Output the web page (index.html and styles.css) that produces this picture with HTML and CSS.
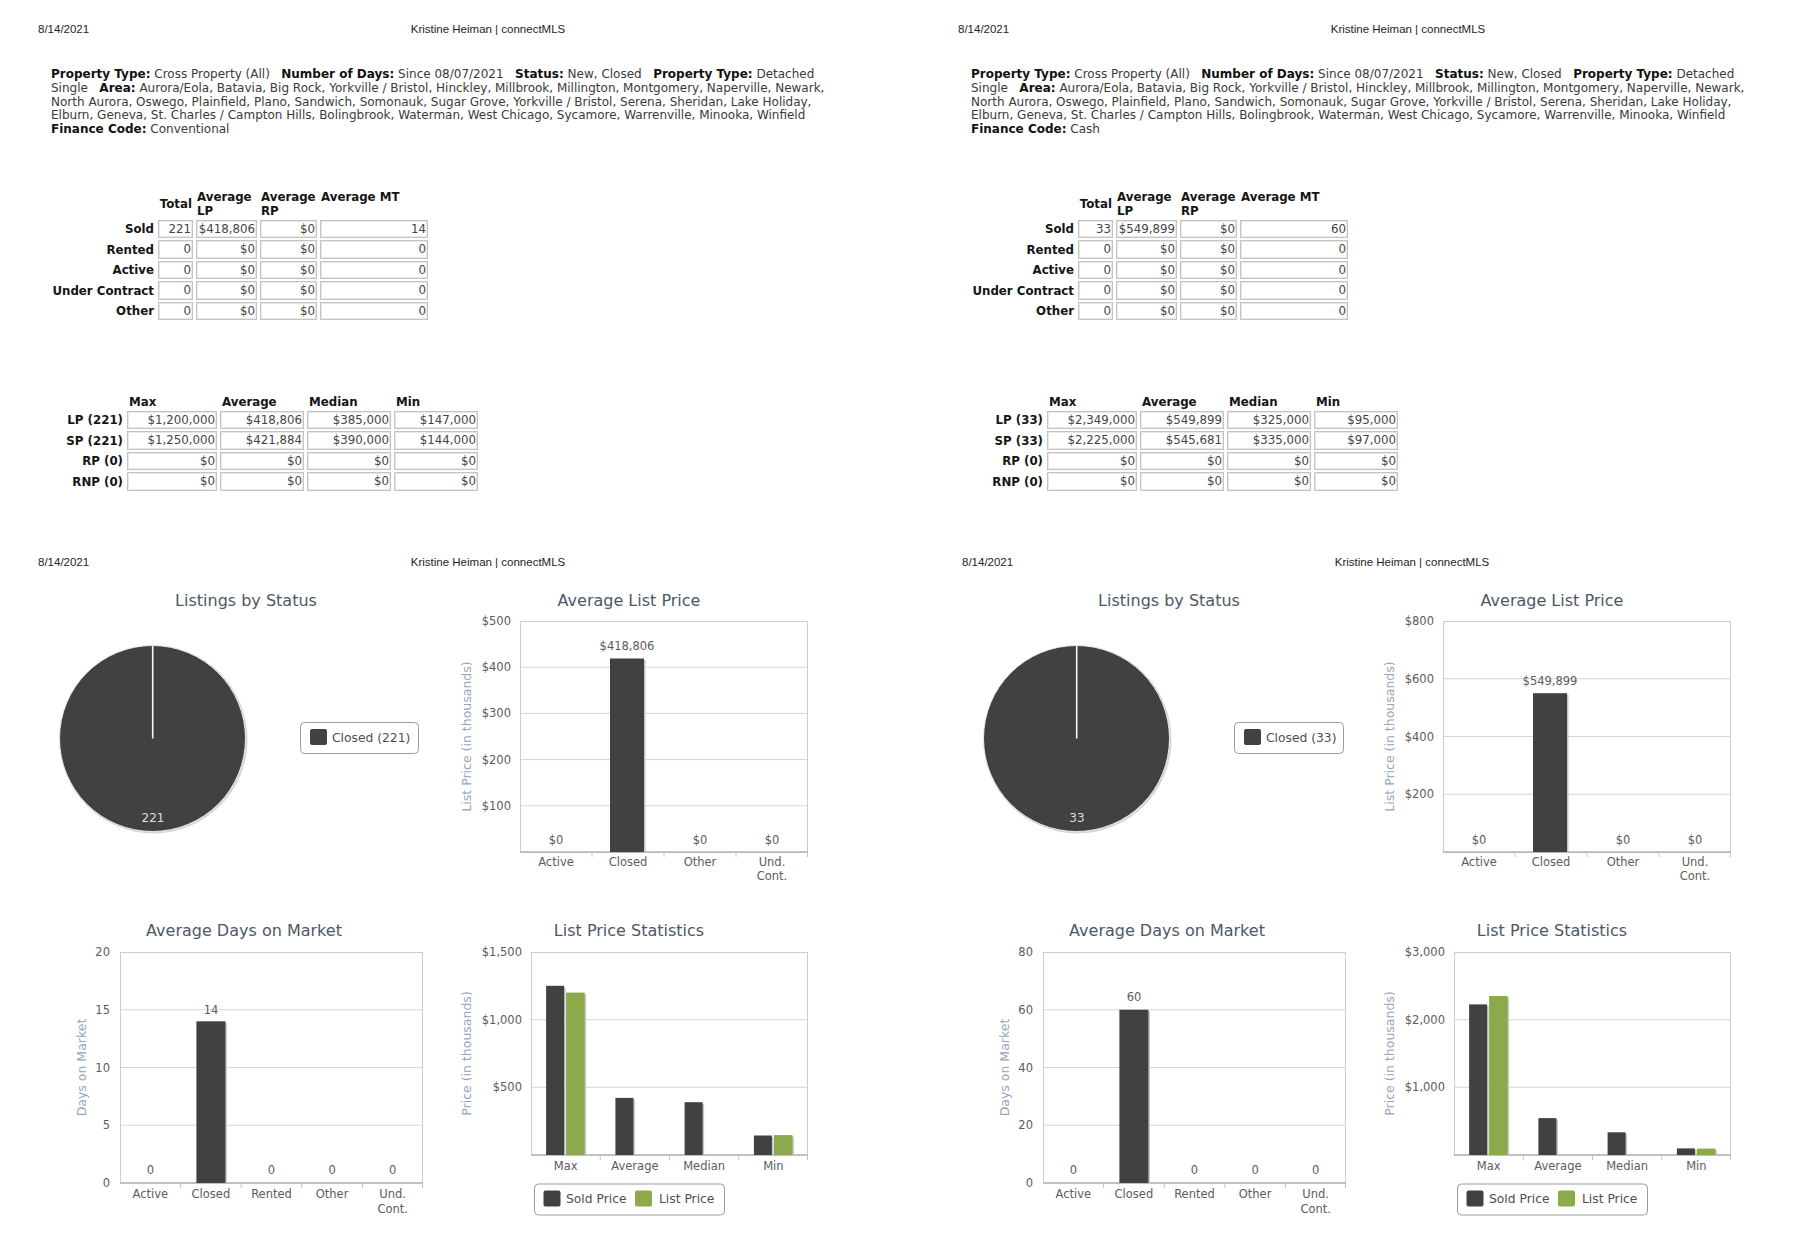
FILE: index.html
```html
<!DOCTYPE html>
<html lang="en">
<head>
<meta charset="utf-8">
<title>connectMLS Statistics</title>
<link rel="stylesheet" href="styles.css">
</head>
<body>
<div class="row row-top">
  <section class="page">
    <div class="hdr"><span class="hdr-date">8/14/2021</span><span class="hdr-title">Kristine Heiman | connectMLS</span></div>
    <p class="crit"><b>Property Type:</b> Cross Property (All)&nbsp;&nbsp; <b>Number of Days:</b> Since 08/07/2021&nbsp;&nbsp; <b>Status:</b> New, Closed&nbsp;&nbsp; <b>Property Type:</b> Detached<br>Single&nbsp;&nbsp; <b>Area:</b> Aurora/Eola, Batavia, Big Rock, Yorkville / Bristol, Hinckley, Millbrook, Millington, Montgomery, Naperville, Newark,<br>North Aurora, Oswego, Plainfield, Plano, Sandwich, Somonauk, Sugar Grove, Yorkville / Bristol, Serena, Sheridan, Lake Holiday,<br>Elburn, Geneva, St. Charles / Campton Hills, Bolingbrook, Waterman, West Chicago, Sycamore, Warrenville, Minooka, Winfield<br><b>Finance Code:</b> Conventional</p>
    <table class="stat stat-a">
      <tr><th class="w-lab"></th><th class="w-tot mid">Total</th><th class="w-lp">Average LP</th><th class="w-rp">Average RP</th><th class="w-mt">Average MT</th></tr>
      <tr><th class="lab">Sold</th><td>221</td><td>$418,806</td><td>$0</td><td>14</td></tr>
      <tr><th class="lab">Rented</th><td>0</td><td>$0</td><td>$0</td><td>0</td></tr>
      <tr><th class="lab">Active</th><td>0</td><td>$0</td><td>$0</td><td>0</td></tr>
      <tr><th class="lab">Under Contract</th><td>0</td><td>$0</td><td>$0</td><td>0</td></tr>
      <tr><th class="lab">Other</th><td>0</td><td>$0</td><td>$0</td><td>0</td></tr>
    </table>
    <table class="stat stat-b">
      <tr><th class="w-lab2"></th><th class="w-max">Max</th><th class="w-q">Average</th><th class="w-q">Median</th><th class="w-q">Min</th></tr>
      <tr><th class="lab">LP (221)</th><td>$1,200,000</td><td>$418,806</td><td>$385,000</td><td>$147,000</td></tr>
      <tr><th class="lab">SP (221)</th><td>$1,250,000</td><td>$421,884</td><td>$390,000</td><td>$144,000</td></tr>
      <tr><th class="lab">RP (0)</th><td>$0</td><td>$0</td><td>$0</td><td>$0</td></tr>
      <tr><th class="lab">RNP (0)</th><td>$0</td><td>$0</td><td>$0</td><td>$0</td></tr>
    </table>
  </section>
  <section class="page">
    <div class="hdr"><span class="hdr-date">8/14/2021</span><span class="hdr-title">Kristine Heiman | connectMLS</span></div>
    <p class="crit"><b>Property Type:</b> Cross Property (All)&nbsp;&nbsp; <b>Number of Days:</b> Since 08/07/2021&nbsp;&nbsp; <b>Status:</b> New, Closed&nbsp;&nbsp; <b>Property Type:</b> Detached<br>Single&nbsp;&nbsp; <b>Area:</b> Aurora/Eola, Batavia, Big Rock, Yorkville / Bristol, Hinckley, Millbrook, Millington, Montgomery, Naperville, Newark,<br>North Aurora, Oswego, Plainfield, Plano, Sandwich, Somonauk, Sugar Grove, Yorkville / Bristol, Serena, Sheridan, Lake Holiday,<br>Elburn, Geneva, St. Charles / Campton Hills, Bolingbrook, Waterman, West Chicago, Sycamore, Warrenville, Minooka, Winfield<br><b>Finance Code:</b> Cash</p>
    <table class="stat stat-a">
      <tr><th class="w-lab"></th><th class="w-tot mid">Total</th><th class="w-lp">Average LP</th><th class="w-rp">Average RP</th><th class="w-mt">Average MT</th></tr>
      <tr><th class="lab">Sold</th><td>33</td><td>$549,899</td><td>$0</td><td>60</td></tr>
      <tr><th class="lab">Rented</th><td>0</td><td>$0</td><td>$0</td><td>0</td></tr>
      <tr><th class="lab">Active</th><td>0</td><td>$0</td><td>$0</td><td>0</td></tr>
      <tr><th class="lab">Under Contract</th><td>0</td><td>$0</td><td>$0</td><td>0</td></tr>
      <tr><th class="lab">Other</th><td>0</td><td>$0</td><td>$0</td><td>0</td></tr>
    </table>
    <table class="stat stat-b">
      <tr><th class="w-lab2"></th><th class="w-max">Max</th><th class="w-q">Average</th><th class="w-q">Median</th><th class="w-q">Min</th></tr>
      <tr><th class="lab">LP (33)</th><td>$2,349,000</td><td>$549,899</td><td>$325,000</td><td>$95,000</td></tr>
      <tr><th class="lab">SP (33)</th><td>$2,225,000</td><td>$545,681</td><td>$335,000</td><td>$97,000</td></tr>
      <tr><th class="lab">RP (0)</th><td>$0</td><td>$0</td><td>$0</td><td>$0</td></tr>
      <tr><th class="lab">RNP (0)</th><td>$0</td><td>$0</td><td>$0</td><td>$0</td></tr>
    </table>
  </section>
</div>

<div class="row row-bottom">
  <section class="page page-b">
    <div class="hdr"><span class="hdr-date">8/14/2021</span><span class="hdr-title">Kristine Heiman | connectMLS</span></div>
    <div class="charts">
      <!-- Listings by Status -->
      <svg class="chart" width="410" height="320" viewBox="0 0 410 320">
        <text class="t-title" x="216" y="26" text-anchor="middle">Listings by Status</text>
        <circle cx="123.5" cy="159.5" r="94" fill="#d6d6d6"/>
        <circle cx="122.5" cy="158.5" r="93" class="pie"/>
        <line x1="122.7" y1="66" x2="122.7" y2="158.5" stroke="#f4f4f4" stroke-width="1.6"/>
        <text class="t-pie" x="123" y="241.5" text-anchor="middle">221</text>
        <rect class="legend" x="270.5" y="142.5" width="118" height="31" rx="4"/>
        <rect class="sw-dark" x="280" y="149" width="17" height="16" rx="2"/>
        <text class="t-leg" x="302" y="161.5">Closed (221)</text>
      </svg>
      <!-- Average List Price -->
      <svg class="chart" width="400" height="320" viewBox="0 0 400 320">
        <text class="t-title" x="189" y="26" text-anchor="middle">Average List Price</text>
        <text class="t-axis" transform="translate(30.5 156.5) rotate(-90)" text-anchor="middle">List Price (in thousands)</text>
        <g class="grid">
          <line x1="80" y1="87.2" x2="368" y2="87.2"/>
          <line x1="80" y1="133.4" x2="368" y2="133.4"/>
          <line x1="80" y1="179.6" x2="368" y2="179.6"/>
          <line x1="80" y1="225.8" x2="368" y2="225.8"/>
        </g>
        <rect class="frame" x="80.5" y="41.5" width="287" height="231"/>
        <line class="axis" x1="80" y1="272" x2="368" y2="272"/>
        <g class="ticks">
          <line x1="152" y1="272" x2="152" y2="277"/>
          <line x1="224" y1="272" x2="224" y2="277"/>
          <line x1="296" y1="272" x2="296" y2="277"/>
          <line x1="367.5" y1="272" x2="367.5" y2="277"/>
        </g>
        <g class="t-lbl" text-anchor="end">
          <text x="71" y="45">$500</text>
          <text x="71" y="91.2">$400</text>
          <text x="71" y="137.4">$300</text>
          <text x="71" y="183.6">$200</text>
          <text x="71" y="229.8">$100</text>
        </g>
        <rect class="bar-sh" x="171.5" y="80" width="34" height="192"/>
        <rect class="bar" x="170" y="78.5" width="34" height="193.5"/>
        <g class="t-lbl" text-anchor="middle">
          <text x="187" y="70">$418,806</text>
          <text x="116" y="264">$0</text>
          <text x="260" y="264">$0</text>
          <text x="332" y="264">$0</text>
          <text x="116" y="286">Active</text>
          <text x="188" y="286">Closed</text>
          <text x="260" y="286">Other</text>
          <text x="332" y="286">Und.</text>
          <text x="332" y="300">Cont.</text>
        </g>
      </svg>
      <!-- Average Days on Market -->
      <svg class="chart" width="410" height="330" viewBox="0 0 410 330">
        <text class="t-title" x="214" y="36" text-anchor="middle">Average Days on Market</text>
        <text class="t-axis" transform="translate(55.5 167.5) rotate(-90)" text-anchor="middle">Days on Market</text>
        <g class="grid">
          <line x1="90" y1="109.75" x2="393" y2="109.75"/>
          <line x1="90" y1="167.5" x2="393" y2="167.5"/>
          <line x1="90" y1="225.25" x2="393" y2="225.25"/>
        </g>
        <rect class="frame" x="90.5" y="52.5" width="302" height="230.5"/>
        <line class="axis" x1="90" y1="283" x2="393" y2="283"/>
        <g class="ticks">
          <line x1="150.6" y1="283" x2="150.6" y2="288"/>
          <line x1="211.2" y1="283" x2="211.2" y2="288"/>
          <line x1="271.8" y1="283" x2="271.8" y2="288"/>
          <line x1="332.4" y1="283" x2="332.4" y2="288"/>
          <line x1="392.5" y1="283" x2="392.5" y2="288"/>
        </g>
        <g class="t-lbl" text-anchor="end">
          <text x="80" y="56">20</text>
          <text x="80" y="113.75">15</text>
          <text x="80" y="171.5">10</text>
          <text x="80" y="229.25">5</text>
          <text x="80" y="287">0</text>
        </g>
        <rect class="bar-sh" x="167.9" y="122.8" width="29" height="160.2"/>
        <rect class="bar" x="166.4" y="121.3" width="29" height="161.7"/>
        <g class="t-lbl" text-anchor="middle">
          <text x="181" y="114">14</text>
          <text x="120.3" y="274">0</text>
          <text x="241.5" y="274">0</text>
          <text x="302.1" y="274">0</text>
          <text x="362.7" y="274">0</text>
          <text x="120.3" y="298">Active</text>
          <text x="180.9" y="298">Closed</text>
          <text x="241.5" y="298">Rented</text>
          <text x="302.1" y="298">Other</text>
          <text x="362.7" y="298">Und.</text>
          <text x="362.7" y="313">Cont.</text>
        </g>
      </svg>
      <!-- List Price Statistics -->
      <svg class="chart" width="400" height="330" viewBox="0 0 400 330">
        <text class="t-title" x="189" y="36" text-anchor="middle">List Price Statistics</text>
        <text class="t-axis" transform="translate(30.5 153.5) rotate(-90)" text-anchor="middle">Price (in thousands)</text>
        <g class="grid">
          <line x1="91" y1="119.7" x2="368" y2="119.7"/>
          <line x1="91" y1="187.3" x2="368" y2="187.3"/>
        </g>
        <rect class="frame" x="91.5" y="52.5" width="276" height="202.5"/>
        <line class="axis" x1="91" y1="255" x2="368" y2="255"/>
        <g class="ticks">
          <line x1="160.25" y1="255" x2="160.25" y2="260"/>
          <line x1="229.5" y1="255" x2="229.5" y2="260"/>
          <line x1="298.75" y1="255" x2="298.75" y2="260"/>
          <line x1="367.5" y1="255" x2="367.5" y2="260"/>
        </g>
        <g class="t-lbl" text-anchor="end">
          <text x="82" y="56">$1,500</text>
          <text x="82" y="123.7">$1,000</text>
          <text x="82" y="191.3">$500</text>
        </g>
        <rect class="bar-sh" x="107.6" y="87.3" width="18" height="167.7"/>
        <rect class="bar" x="106.1" y="85.8" width="18" height="169.2"/>
        <rect class="bar-sh" x="127.6" y="94.1" width="18.5" height="160.9"/>
        <rect class="bar-g" x="126.1" y="92.6" width="18.5" height="162.4"/>
        <rect class="bar-sh" x="176.9" y="199.4" width="18" height="55.6"/>
        <rect class="bar" x="175.4" y="197.9" width="18" height="57.1"/>
        <rect class="bar-sh" x="246.1" y="203.7" width="18" height="51.3"/>
        <rect class="bar" x="244.6" y="202.2" width="18" height="52.8"/>
        <rect class="bar-sh" x="315.4" y="237" width="18" height="18"/>
        <rect class="bar" x="313.9" y="235.5" width="18" height="19.5"/>
        <rect class="bar-sh" x="335.4" y="236.6" width="18.5" height="18.4"/>
        <rect class="bar-g" x="333.9" y="235.1" width="18.5" height="19.9"/>
        <g class="t-lbl" text-anchor="middle">
          <text x="125.6" y="270">Max</text>
          <text x="194.9" y="270">Average</text>
          <text x="264.1" y="270">Median</text>
          <text x="333.4" y="270">Min</text>
        </g>
        <rect class="legend" x="94.5" y="284" width="190" height="31" rx="4"/>
        <rect class="sw-dark" x="103.5" y="290.5" width="17" height="16" rx="2"/>
        <text class="t-leg" x="126" y="303">Sold Price</text>
        <rect class="sw-green" x="195" y="290.5" width="17" height="16" rx="2"/>
        <text class="t-leg" x="219" y="303">List Price</text>
      </svg>
    </div>
  </section>

  <section class="page page-b page-b2">
    <div class="hdr"><span class="hdr-date">8/14/2021</span><span class="hdr-title">Kristine Heiman | connectMLS</span></div>
    <div class="charts">
      <!-- Listings by Status -->
      <svg class="chart" width="410" height="320" viewBox="0 0 410 320">
        <text class="t-title" x="216" y="26" text-anchor="middle">Listings by Status</text>
        <circle cx="124.5" cy="159.5" r="94" fill="#d6d6d6"/>
        <circle cx="123.5" cy="158.5" r="93" class="pie"/>
        <line x1="123.7" y1="66" x2="123.7" y2="158.5" stroke="#f4f4f4" stroke-width="1.6"/>
        <text class="t-pie" x="124" y="241.5" text-anchor="middle">33</text>
        <rect class="legend" x="281.5" y="142.5" width="109" height="31" rx="4"/>
        <rect class="sw-dark" x="291" y="149" width="17" height="16" rx="2"/>
        <text class="t-leg" x="313" y="161.5">Closed (33)</text>
      </svg>
      <!-- Average List Price -->
      <svg class="chart" width="400" height="320" viewBox="0 0 400 320">
        <text class="t-title" x="189" y="26" text-anchor="middle">Average List Price</text>
        <text class="t-axis" transform="translate(30.5 156.5) rotate(-90)" text-anchor="middle">List Price (in thousands)</text>
        <g class="grid">
          <line x1="80" y1="98.75" x2="368" y2="98.75"/>
          <line x1="80" y1="156.5" x2="368" y2="156.5"/>
          <line x1="80" y1="214.25" x2="368" y2="214.25"/>
        </g>
        <rect class="frame" x="80.5" y="41.5" width="287" height="231"/>
        <line class="axis" x1="80" y1="272" x2="368" y2="272"/>
        <g class="ticks">
          <line x1="152" y1="272" x2="152" y2="277"/>
          <line x1="224" y1="272" x2="224" y2="277"/>
          <line x1="296" y1="272" x2="296" y2="277"/>
          <line x1="367.5" y1="272" x2="367.5" y2="277"/>
        </g>
        <g class="t-lbl" text-anchor="end">
          <text x="71" y="45">$800</text>
          <text x="71" y="102.75">$600</text>
          <text x="71" y="160.5">$400</text>
          <text x="71" y="218.25">$200</text>
        </g>
        <rect class="bar-sh" x="171.5" y="114.7" width="34" height="157.3"/>
        <rect class="bar" x="170" y="113.2" width="34" height="158.8"/>
        <g class="t-lbl" text-anchor="middle">
          <text x="187" y="105">$549,899</text>
          <text x="116" y="264">$0</text>
          <text x="260" y="264">$0</text>
          <text x="332" y="264">$0</text>
          <text x="116" y="286">Active</text>
          <text x="188" y="286">Closed</text>
          <text x="260" y="286">Other</text>
          <text x="332" y="286">Und.</text>
          <text x="332" y="300">Cont.</text>
        </g>
      </svg>
      <!-- Average Days on Market -->
      <svg class="chart" width="410" height="330" viewBox="0 0 410 330">
        <text class="t-title" x="214" y="36" text-anchor="middle">Average Days on Market</text>
        <text class="t-axis" transform="translate(55.5 167.5) rotate(-90)" text-anchor="middle">Days on Market</text>
        <g class="grid">
          <line x1="90" y1="109.75" x2="393" y2="109.75"/>
          <line x1="90" y1="167.5" x2="393" y2="167.5"/>
          <line x1="90" y1="225.25" x2="393" y2="225.25"/>
        </g>
        <rect class="frame" x="90.5" y="52.5" width="302" height="230.5"/>
        <line class="axis" x1="90" y1="283" x2="393" y2="283"/>
        <g class="ticks">
          <line x1="150.6" y1="283" x2="150.6" y2="288"/>
          <line x1="211.2" y1="283" x2="211.2" y2="288"/>
          <line x1="271.8" y1="283" x2="271.8" y2="288"/>
          <line x1="332.4" y1="283" x2="332.4" y2="288"/>
          <line x1="392.5" y1="283" x2="392.5" y2="288"/>
        </g>
        <g class="t-lbl" text-anchor="end">
          <text x="80" y="56">80</text>
          <text x="80" y="113.75">60</text>
          <text x="80" y="171.5">40</text>
          <text x="80" y="229.25">20</text>
          <text x="80" y="287">0</text>
        </g>
        <rect class="bar-sh" x="167.9" y="111.25" width="29" height="171.75"/>
        <rect class="bar" x="166.4" y="109.75" width="29" height="173.25"/>
        <g class="t-lbl" text-anchor="middle">
          <text x="181" y="101">60</text>
          <text x="120.3" y="274">0</text>
          <text x="241.5" y="274">0</text>
          <text x="302.1" y="274">0</text>
          <text x="362.7" y="274">0</text>
          <text x="120.3" y="298">Active</text>
          <text x="180.9" y="298">Closed</text>
          <text x="241.5" y="298">Rented</text>
          <text x="302.1" y="298">Other</text>
          <text x="362.7" y="298">Und.</text>
          <text x="362.7" y="313">Cont.</text>
        </g>
      </svg>
      <!-- List Price Statistics -->
      <svg class="chart" width="400" height="330" viewBox="0 0 400 330">
        <text class="t-title" x="189" y="36" text-anchor="middle">List Price Statistics</text>
        <text class="t-axis" transform="translate(30.5 153.5) rotate(-90)" text-anchor="middle">Price (in thousands)</text>
        <g class="grid">
          <line x1="91" y1="119.7" x2="368" y2="119.7"/>
          <line x1="91" y1="187.3" x2="368" y2="187.3"/>
        </g>
        <rect class="frame" x="91.5" y="52.5" width="276" height="202.5"/>
        <line class="axis" x1="91" y1="255" x2="368" y2="255"/>
        <g class="ticks">
          <line x1="160.25" y1="255" x2="160.25" y2="260"/>
          <line x1="229.5" y1="255" x2="229.5" y2="260"/>
          <line x1="298.75" y1="255" x2="298.75" y2="260"/>
          <line x1="367.5" y1="255" x2="367.5" y2="260"/>
        </g>
        <g class="t-lbl" text-anchor="end">
          <text x="82" y="56">$3,000</text>
          <text x="82" y="123.7">$2,000</text>
          <text x="82" y="191.3">$1,000</text>
        </g>
        <rect class="bar-sh" x="107.6" y="105.9" width="18" height="149.1"/>
        <rect class="bar" x="106.1" y="104.4" width="18" height="150.6"/>
        <rect class="bar-sh" x="127.6" y="97.5" width="18.5" height="157.5"/>
        <rect class="bar-g" x="126.1" y="96" width="18.5" height="159"/>
        <rect class="bar-sh" x="176.9" y="219.6" width="18" height="35.4"/>
        <rect class="bar" x="175.4" y="218.1" width="18" height="36.9"/>
        <rect class="bar-sh" x="246.1" y="233.8" width="18" height="21.2"/>
        <rect class="bar" x="244.6" y="232.3" width="18" height="22.7"/>
        <rect class="bar-sh" x="315.4" y="249.9" width="18" height="5.1"/>
        <rect class="bar" x="313.9" y="248.4" width="18" height="6.6"/>
        <rect class="bar-sh" x="335.4" y="250.1" width="18.5" height="4.9"/>
        <rect class="bar-g" x="333.9" y="248.6" width="18.5" height="6.4"/>
        <g class="t-lbl" text-anchor="middle">
          <text x="125.6" y="270">Max</text>
          <text x="194.9" y="270">Average</text>
          <text x="264.1" y="270">Median</text>
          <text x="333.4" y="270">Min</text>
        </g>
        <rect class="legend" x="94.5" y="284" width="190" height="31" rx="4"/>
        <rect class="sw-dark" x="103.5" y="290.5" width="17" height="16" rx="2"/>
        <text class="t-leg" x="126" y="303">Sold Price</text>
        <rect class="sw-green" x="195" y="290.5" width="17" height="16" rx="2"/>
        <text class="t-leg" x="219" y="303">List Price</text>
      </svg>
    </div>
  </section>
</div>
</body>
</html>
```

FILE: styles.css
```css
* { box-sizing: border-box; }

html, body {
  margin: 0;
  padding: 0;
  background: #ffffff;
}

body {
  width: 1800px;
  height: 1260px;
  overflow: hidden;
  font-family: "DejaVu Sans", Verdana, sans-serif;
  color: #222;
}

.row {
  display: flex;
}

.row-top {
  height: 540px;
}

.page {
  width: 920px;
  flex: none;
  padding-top: 22px;
}

.page-b {
  width: 923px;
  padding-top: 15px;
}

/* print header */
.hdr {
  display: grid;
  width: 900px;
  margin-left: 38px;
  height: 14px;
  line-height: 14px;
  font-family: "Liberation Sans", Arial, sans-serif;
  font-size: 11.5px;
  color: #1e1e1e;
}

.page-b2 .hdr {
  margin-left: 39px;
}

.hdr > span {
  grid-area: 1 / 1;
  white-space: nowrap;
}

.hdr-title {
  justify-self: center;
}

/* search criteria */
.crit {
  margin: 32px 0 0 51px;
  font-family: "DejaVu Sans", Verdana, sans-serif;
  font-size: 12px;
  line-height: 13.8px;
  color: #3a3a3a;
  white-space: nowrap;
}

.crit b {
  color: #111;
}

/* stat tables */
.stat {
  margin-left: 49px;
  border-collapse: separate;
  border-spacing: 3px 2px;
  font-size: 11.8px;
  table-layout: auto;
}

.stat-a {
  margin-top: 51px;
}

.stat-b {
  margin-top: 70.5px;
}

.stat th {
  padding: 0 1px;
  font-weight: bold;
  color: #151515;
  line-height: 14px;
  text-align: left;
  vertical-align: top;
  white-space: normal;
}

.stat th.mid {
  vertical-align: middle;
  text-align: right;
}

.stat-b th {
  padding-left: 2px;
}

.stat th.lab {
  text-align: right;
  white-space: nowrap;
  vertical-align: middle;
  padding: 0 1px 0 0;
}

.stat td {
  height: 18.5px;
  padding: 0 1px;
  line-height: 16.5px;
  text-align: right;
  color: #444;
  border: 1px solid #c4c4c4;
  box-shadow: inset 0 0 0 1px #e8e8e8;
  white-space: nowrap;
}

.w-lab { width: 103px; }
.w-tot { width: 35px; }
.w-lp { width: 61px; }
.w-rp { width: 57px; }
.w-mt { width: 108px; }

.w-lab2 { width: 72px; }
.w-max { width: 90px; }
.w-q { width: 84px; }

/* charts */
.charts {
  display: grid;
  grid-template-columns: 410px 400px;
  grid-template-rows: 320px 330px;
  margin-top: 11px;
  padding-left: 30px;
}

.chart {
  display: block;
  font-family: "DejaVu Sans", sans-serif;
}

.t-title {
  font-size: 16px;
  fill: #4c5866;
}

.t-lbl {
  font-size: 11.5px;
  fill: #5c5c5c;
}

.t-axis {
  font-size: 12.5px;
  fill: #94a6b9;
}

.t-leg {
  font-size: 12.3px;
  fill: #4f4f4f;
}

.t-pie {
  font-size: 12px;
  fill: #dcdcdc;
}

.pie {
  fill: #414141;
  stroke: #ececec;
  stroke-width: 1;
}

.grid line {
  stroke: #d6d6d6;
  stroke-width: 1;
}

.frame {
  fill: none;
  stroke: #cdcdcd;
  stroke-width: 1;
}

.axis {
  stroke: #b3b3b3;
  stroke-width: 1.5;
}

.ticks line {
  stroke: #c2c2c2;
  stroke-width: 1;
}

.bar {
  fill: #414141;
}

.bar-g {
  fill: #8caa4b;
}

.bar-sh {
  fill: #c4c4c4;
}

.legend {
  fill: #ffffff;
  stroke: #9c9c9c;
  stroke-width: 1;
}

.sw-dark {
  fill: #414141;
}

.sw-green {
  fill: #8caa4b;
}
```
